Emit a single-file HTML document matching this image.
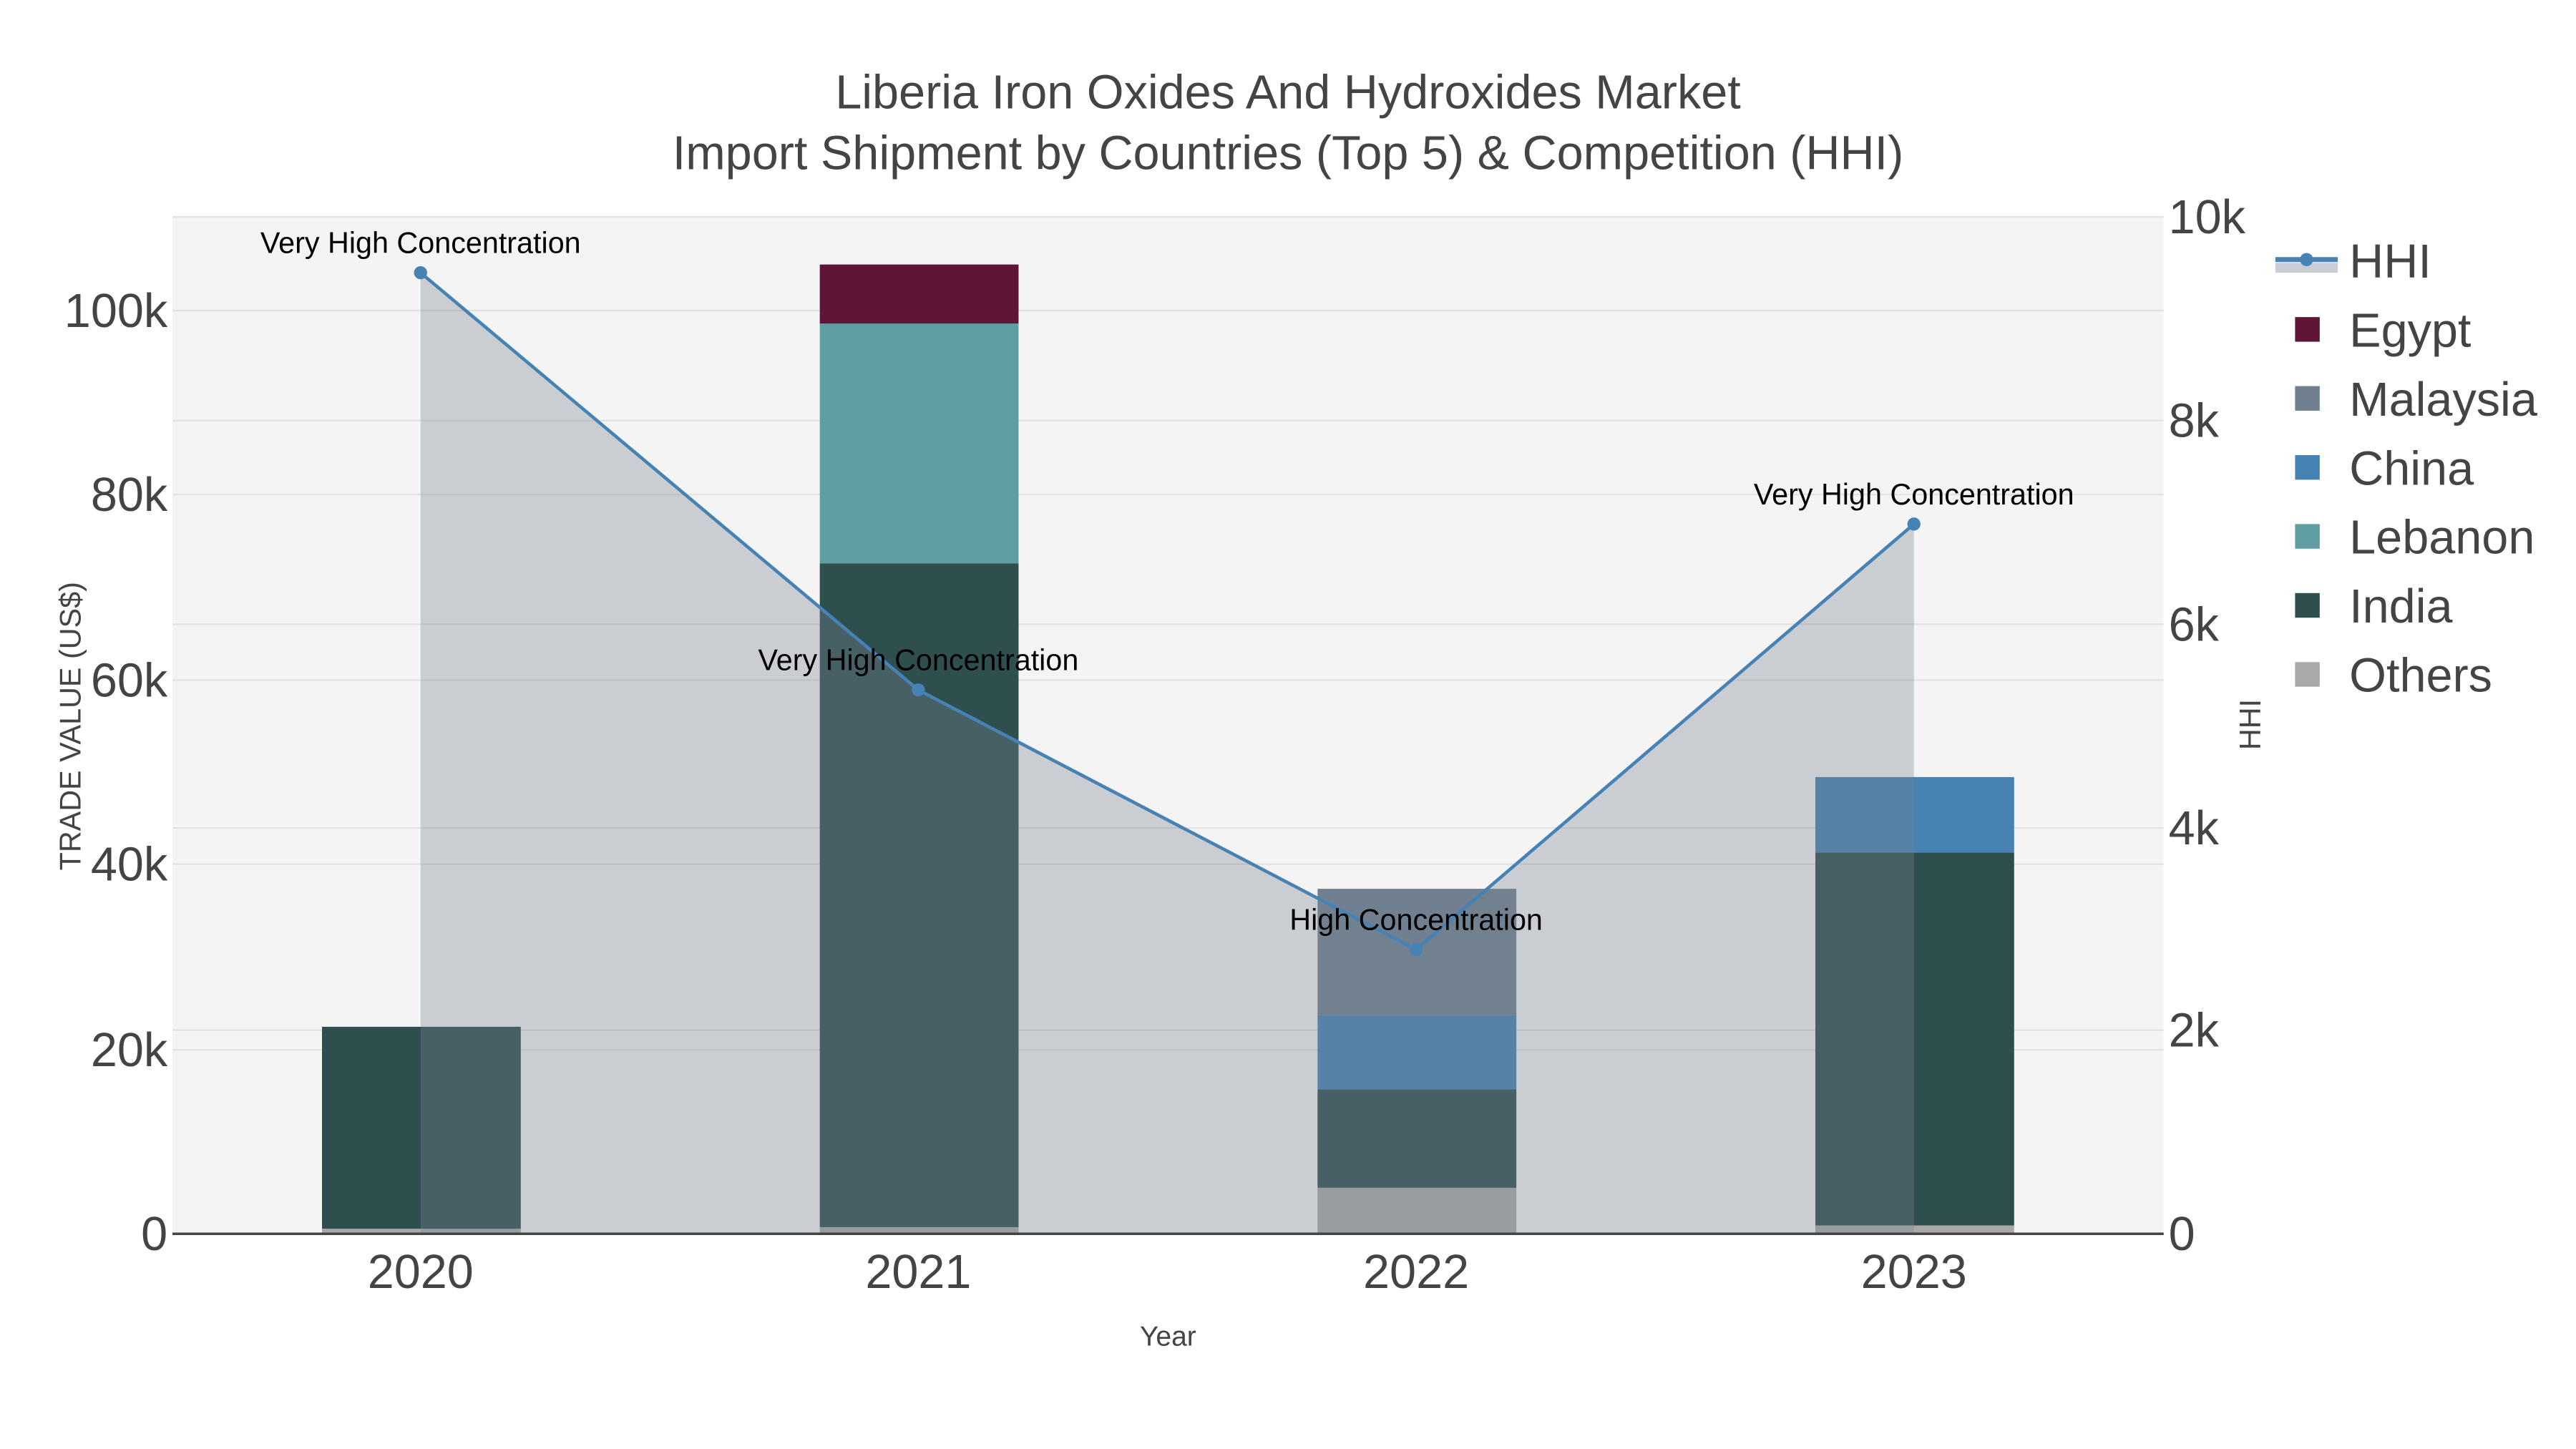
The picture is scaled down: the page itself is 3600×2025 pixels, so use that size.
<!DOCTYPE html>
<html><head><meta charset="utf-8"><style>
html,body{margin:0;padding:0;background:#fff;}
svg{display:block;}
text{font-family:"Liberation Sans",sans-serif;}
</style></head><body>
<svg width="3600" height="2025" viewBox="0 0 1568 882" xmlns="http://www.w3.org/2000/svg">
<rect x="0" y="0" width="1568" height="882" fill="#fff"/>
<rect x="105" y="132" width="1212" height="619" fill="#f4f4f4"/>
<g stroke="#e2e2e2" stroke-width="1">
<line x1="105" x2="1317" y1="639" y2="639"/>
<line x1="105" x2="1317" y1="526" y2="526"/>
<line x1="105" x2="1317" y1="414" y2="414"/>
<line x1="105" x2="1317" y1="301" y2="301"/>
<line x1="105" x2="1317" y1="189" y2="189"/>
<line x1="105" x2="1317" y1="132" y2="132"/>
<line x1="105" x2="1317" y1="256" y2="256"/>
<line x1="105" x2="1317" y1="380" y2="380"/>
<line x1="105" x2="1317" y1="504" y2="504"/>
<line x1="105" x2="1317" y1="627" y2="627"/>
</g>
<g>
<rect x="196" y="625" width="121" height="123" fill="#2f4f4f"/>
<rect x="196" y="748" width="121" height="3" fill="#a9a9a9"/>

<rect x="499" y="161" width="121" height="36" fill="#5f1535"/>
<rect x="499" y="197" width="121" height="146" fill="#5f9ea0"/>
<rect x="499" y="343" width="121" height="404" fill="#2f4f4f"/>
<rect x="499" y="747" width="121" height="4" fill="#a9a9a9"/>

<rect x="802" y="541" width="121" height="77" fill="#708090"/>
<rect x="802" y="618" width="121" height="45" fill="#4682b4"/>
<rect x="802" y="663" width="121" height="60" fill="#2f4f4f"/>
<rect x="802" y="723" width="121" height="28" fill="#a9a9a9"/>

<rect x="1105" y="473" width="121" height="46" fill="#4682b4"/>
<rect x="1105" y="519" width="121" height="227" fill="#2f4f4f"/>
<rect x="1105" y="746" width="121" height="5" fill="#a9a9a9"/>
</g>
<polygon points="256,751 256,166 559,420 862,578 1165,319 1165,751" fill="rgb(119,130,146)" fill-opacity="0.33"/>
<polyline points="256,166 559,420 862,578 1165,319" fill="none" stroke="#4682b4" stroke-width="2"/>
<g fill="#4682b4"><circle cx="256" cy="166" r="4"/><circle cx="559" cy="420" r="4"/><circle cx="862" cy="578" r="4"/><circle cx="1165" cy="319" r="4"/></g>
<line x1="105" x2="1317" y1="751" y2="751" stroke="#444" stroke-width="1.5"/>
<g font-size="18" fill="#000" text-anchor="middle">
<text x="256" y="154">Very High Concentration</text>
<text x="559" y="408">Very High Concentration</text>
<text x="862" y="566">High Concentration</text>
<text x="1165" y="307">Very High Concentration</text>
</g>
<g fill="#444" text-anchor="middle" font-size="29">
<text x="784" y="66">Liberia Iron Oxides And Hydroxides Market</text>
<text x="784" y="103">Import Shipment by Countries (Top 5) &amp; Competition (HHI)</text>
</g>
<g fill="#444" font-size="29" text-anchor="end">
<text x="102" y="761">0</text>
<text x="102" y="649">20k</text>
<text x="102" y="536">40k</text>
<text x="102" y="424">60k</text>
<text x="102" y="311">80k</text>
<text x="102" y="199">100k</text>
</g>
<g fill="#444" font-size="29" text-anchor="start">
<text x="1320" y="761">0</text>
<text x="1320" y="637">2k</text>
<text x="1320" y="514">4k</text>
<text x="1320" y="390">6k</text>
<text x="1320" y="266">8k</text>
<text x="1320" y="142">10k</text>
</g>
<g fill="#444" font-size="29" text-anchor="middle">
<text x="256" y="784">2020</text>
<text x="559" y="784">2021</text>
<text x="862" y="784">2022</text>
<text x="1165" y="784">2023</text>
</g>
<text x="711" y="819" font-size="17" fill="#444" text-anchor="middle">Year</text>
<text transform="translate(49,442) rotate(-90)" font-size="18" fill="#444" text-anchor="middle">TRADE VALUE (US$)</text>
<text transform="translate(1376,441) rotate(-90)" font-size="18" fill="#444" text-anchor="middle">HHI</text>
<rect x="1385" y="160" width="38" height="6" fill="#c9cdd4"/>
<line x1="1385" x2="1423" y1="158" y2="158" stroke="#4682b4" stroke-width="3"/>
<circle cx="1404" cy="158" r="4" fill="#4682b4"/>
<g font-size="29" fill="#444">
<text x="1430" y="169">HHI</text>
<text x="1430" y="211">Egypt</text>
<text x="1430" y="253">Malaysia</text>
<text x="1430" y="295">China</text>
<text x="1430" y="337">Lebanon</text>
<text x="1430" y="379">India</text>
<text x="1430" y="421">Others</text>
</g>
<rect x="1397" y="193" width="15" height="15" fill="#5f1535"/>
<rect x="1397" y="235" width="15" height="15" fill="#708090"/>
<rect x="1397" y="277" width="15" height="15" fill="#4682b4"/>
<rect x="1397" y="319" width="15" height="15" fill="#5f9ea0"/>
<rect x="1397" y="361" width="15" height="15" fill="#2f4f4f"/>
<rect x="1397" y="403" width="15" height="15" fill="#a9a9a9"/>
</svg>
</body></html>
